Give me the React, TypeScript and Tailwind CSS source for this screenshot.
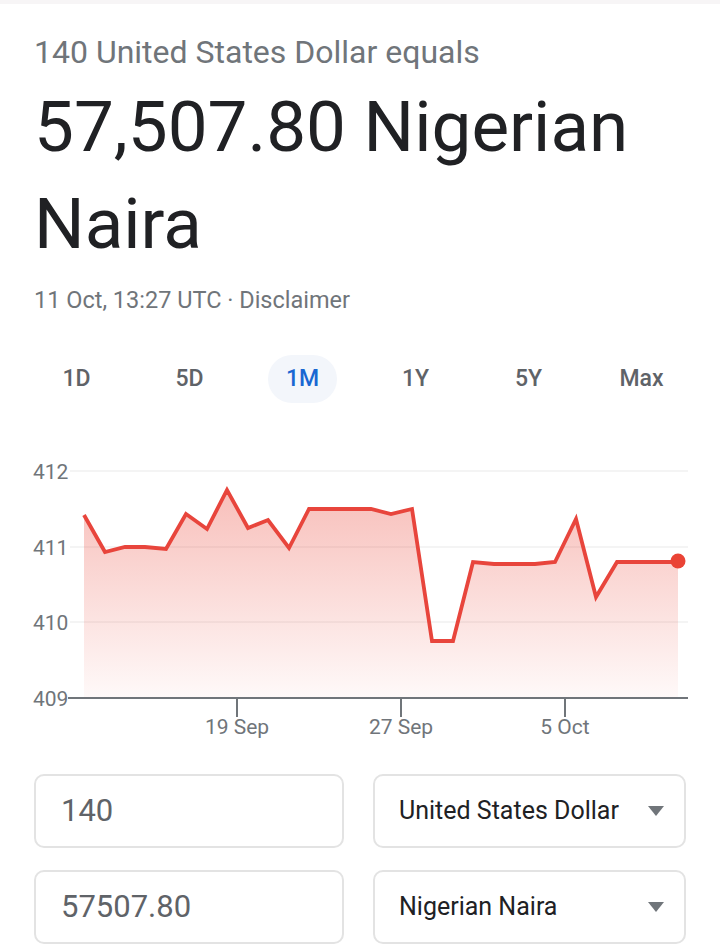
import React from "react";

const pts: [number, number][] = [
  [84, 75], [105, 112], [125, 107], [145, 107], [166, 109], [186, 74], [207, 89],
  [227, 50], [248, 88], [268, 80], [289, 108], [309, 69], [330, 69], [350, 69],
  [371, 69], [391, 74], [412, 69], [432, 201], [453, 201], [473, 122], [494, 124],
  [514, 124], [535, 124], [555, 122], [576, 79], [596, 157], [617, 122], [637, 122],
  [658, 122], [678, 122],
];

function Chart() {
  const line = pts.map((p) => p.join(",")).join(" ");
  const area = `84,258 ${line} 678,258`;
  const grid = [31, 107, 182];
  const yl = [
    { y: 31, t: "412" },
    { y: 107, t: "411" },
    { y: 182, t: "410" },
    { y: 258, t: "409" },
  ];
  const xl = [
    { x: 237, t: "19 Sep" },
    { x: 401, t: "27 Sep" },
    { x: 565, t: "5 Oct" },
  ];
  return (
    <svg width="720" height="310" viewBox="0 0 720 310" className="block">
      <defs>
        <linearGradient id="fillg" x1="0" y1="0" x2="0" y2="1">
          <stop offset="0%" stopColor="#ea4335" stopOpacity="0.34" />
          <stop offset="100%" stopColor="#ea4335" stopOpacity="0.03" />
        </linearGradient>
      </defs>
      {grid.map((g) => (
        <line key={g} x1="70" x2="688" y1={g} y2={g} stroke="#f1f1f1" strokeWidth="1.5" />
      ))}
      <polygon points={area} fill="url(#fillg)" />
      <polyline points={line} fill="none" stroke="#e8453c" strokeWidth="3.8" strokeLinejoin="miter" strokeMiterlimit="10" />
      <circle cx="678" cy="121" r="7.5" fill="#ea4335" />
      <line x1="68" x2="688" y1="258" y2="258" stroke="#70757a" strokeWidth="2" />
      {xl.map((l) => (
        <line key={l.x} x1={l.x} x2={l.x} y1="258" y2="277" stroke="#70757a" strokeWidth="2" />
      ))}
      {yl.map((l) => (
        <text key={l.t} x="33" y={l.y + 7.5} fontSize="21" fill="#70757a" fontFamily="Roboto, sans-serif">
          {l.t}
        </text>
      ))}
      {xl.map((l) => (
        <text key={l.t} x={l.x} y="294" fontSize="21" fill="#70757a" textAnchor="middle" fontFamily="Roboto, sans-serif">
          {l.t}
        </text>
      ))}
    </svg>
  );
}

function Caret() {
  return (
    <svg width="16" height="10" viewBox="0 0 16 10" className="shrink-0">
      <path d="M0 0 L16 0 L8 10 Z" fill="#70757a" />
    </svg>
  );
}

export default function App() {
  const tabs = ["1D", "5D", "1M", "1Y", "5Y", "Max"];
  return (
    <div className="w-[720px] h-[947px] bg-white overflow-hidden font-[Roboto,sans-serif]">
      <div className="h-[4px] bg-[#f7f5f6]" />
      <div className="px-[34px]">
        <div className="mt-[28px] text-[32px] leading-[40px] text-[#70757a]">140 United States Dollar equals</div>
        <div className="mt-[6px] text-[71px] leading-[97px] text-[#202124]">57,507.80 Nigerian Naira</div>
        <div className="mt-[13px] text-[23.5px] leading-[30px] text-[#70757a]">11 Oct, 13:27 UTC · Disclaimer</div>
      </div>
      <div className="mt-[40px] mx-[20px] w-[678px] grid grid-cols-6">
        {tabs.map((t) => (
          <div key={t} className="flex justify-center">
            <div
              className={
                t === "1M"
                  ? "w-[69px] h-[48px] rounded-full bg-[#f3f6fb] flex items-center justify-center text-[23px] font-medium text-[#1967d2]"
                  : "w-[69px] h-[48px] rounded-full flex items-center justify-center text-[23px] font-medium text-[#5f6368]"
              }
            >
              {t}
            </div>
          </div>
        ))}
      </div>
      <div className="mt-[37px]">
        <Chart />
      </div>
      <div className="mt-[24px] pl-[34px] flex flex-col gap-[22px]">
        <div className="flex gap-[29px]">
          <div className="w-[310px] h-[74px] rounded-[10px] border-2 border-[#e3e3e3] flex items-center pl-[25px] text-[31px] text-[#5f6368]">
            140
          </div>
          <div className="w-[313px] h-[74px] rounded-[10px] border-2 border-[#e3e3e3] flex items-center justify-between pl-[24px] pr-[20px] text-[25px] text-[#202124]">
            <span>United States Dollar</span>
            <Caret />
          </div>
        </div>
        <div className="flex gap-[29px]">
          <div className="w-[310px] h-[74px] rounded-[10px] border-2 border-[#e3e3e3] flex items-center pl-[25px] text-[31px] text-[#5f6368]">
            57507.80
          </div>
          <div className="w-[313px] h-[74px] rounded-[10px] border-2 border-[#e3e3e3] flex items-center justify-between pl-[24px] pr-[20px] text-[25px] text-[#202124]">
            <span>Nigerian Naira</span>
            <Caret />
          </div>
        </div>
      </div>
    </div>
  );
}
